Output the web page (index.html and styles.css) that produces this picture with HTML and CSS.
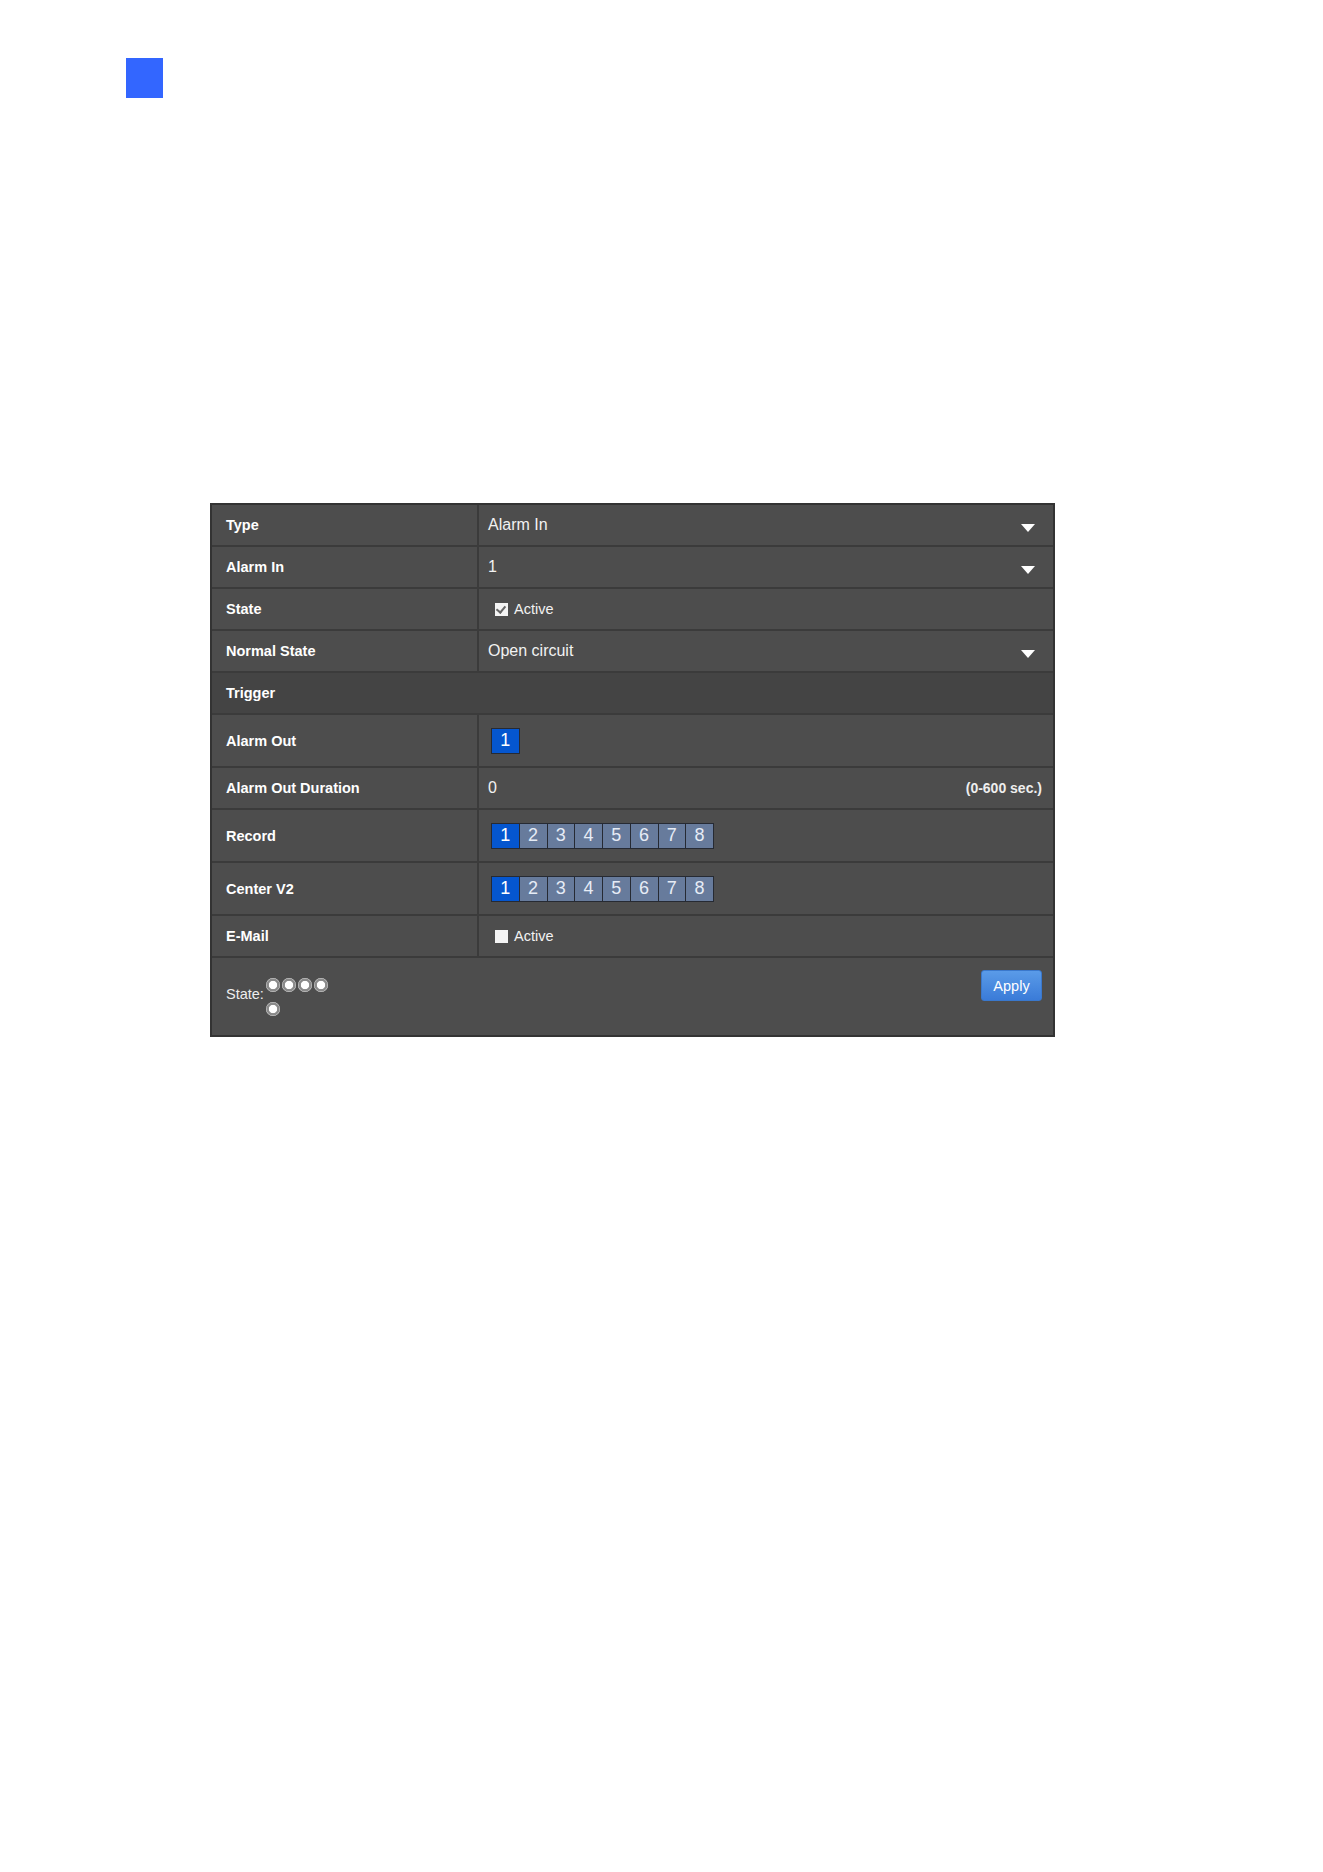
FILE: index.html
```html
<!DOCTYPE html>
<html lang="en">
<head>
  <meta charset="UTF-8">
  <title>Alarm In Settings</title>
  <link rel="stylesheet" href="styles.css">
</head>
<body>
  <div class="marker"></div>

  <div class="panel">
    <div class="row">
      <div class="label">Type</div>
      <div class="value select">Alarm In<span class="caret"></span></div>
    </div>
    <div class="row">
      <div class="label">Alarm In</div>
      <div class="value select">1<span class="caret"></span></div>
    </div>
    <div class="row">
      <div class="label">State</div>
      <div class="value"><label class="check"><span class="box checked"></span>Active</label></div>
    </div>
    <div class="row">
      <div class="label">Normal State</div>
      <div class="value select">Open circuit<span class="caret"></span></div>
    </div>
    <div class="row section">Trigger</div>
    <div class="row tall">
      <div class="label">Alarm Out</div>
      <div class="value"><div class="channels"><span class="ch on">1</span></div></div>
    </div>
    <div class="row">
      <div class="label">Alarm Out Duration</div>
      <div class="value select">0<span class="hint">(0-600 sec.)</span></div>
    </div>
    <div class="row tall">
      <div class="label">Record</div>
      <div class="value">
        <div class="channels">
          <span class="ch on">1</span><span class="ch">2</span><span class="ch">3</span><span class="ch">4</span><span class="ch">5</span><span class="ch">6</span><span class="ch">7</span><span class="ch">8</span>
        </div>
      </div>
    </div>
    <div class="row tall">
      <div class="label">Center V2</div>
      <div class="value">
        <div class="channels">
          <span class="ch on">1</span><span class="ch">2</span><span class="ch">3</span><span class="ch">4</span><span class="ch">5</span><span class="ch">6</span><span class="ch">7</span><span class="ch">8</span>
        </div>
      </div>
    </div>
    <div class="row">
      <div class="label">E-Mail</div>
      <div class="value"><label class="check"><span class="box"></span>Active</label></div>
    </div>
    <div class="footer">
      <div class="status">
        <span class="status-label">State:</span>
        <span class="leds"><i></i><i></i><i></i><i></i><i></i></span>
      </div>
      <button class="apply">Apply</button>
    </div>
  </div>
</body>
</html>
```

FILE: styles.css
```css
body { margin:0; background:#fff; font-family:"Liberation Sans", Arial, sans-serif; }
.marker { width:37px; height:40px; background:#3366ff; margin:58px 0 0 126px; }

.panel { width:845px; margin:405px 0 0 210px; border:2px solid #333; box-sizing:border-box; background:#4d4d4d; color:#fff; }
.row { display:flex; min-height:40px; border-bottom:2px solid #3b3b3b; }
.row.tall { min-height:51px; }
.row.section { background:#444; align-items:center; padding-left:14px; font-weight:bold; font-size:14.5px; }
.label { width:267px; box-sizing:border-box; border-right:2px solid #3b3b3b; padding-left:14px; display:flex; align-items:center; font-weight:bold; font-size:14.5px; }
.value { flex:1; display:flex; align-items:center; padding:0 18px 0 9px; font-size:16px; color:#f2f2f2; }
.select { justify-content:space-between; }
.caret { width:0; height:0; border-left:7px solid transparent; border-right:7px solid transparent; border-top:8px solid #fff; margin-top:5px; }
.hint { font-size:14px; font-weight:bold; color:#eee; margin-right:-7px; }

.check { display:flex; align-items:center; font-size:14.5px; margin-left:7px; }
.box { width:13px; height:13px; background:#f4f4f4; margin-right:6px; position:relative; }
.box.checked::after { content:""; position:absolute; left:3px; top:1px; width:4px; height:7px; border:solid #666; border-width:0 2px 2px 0; transform:rotate(40deg); }

.channels { display:flex; margin-left:3px; border-left:1px solid #262a33; }
.ch { width:26.75px; height:24px; border:1px solid #262a33; border-left:none; background:#677b9c; color:#e6ecf6; font-size:18px; display:flex; align-items:center; justify-content:center; }
.ch.on { background:#0556cf; color:#fff; }

.footer { display:flex; justify-content:space-between; align-items:flex-start; height:77px; padding:12px 11px 0 14px; box-sizing:border-box; }
.status { display:flex; align-items:flex-start; font-size:14.5px; color:#eee; margin-top:8px; }
.status-label { margin-top:8px; }
.leds { display:flex; flex-wrap:wrap; width:66px; margin-left:2px; row-gap:10px; }
.leds i { width:14px; height:14px; margin-right:2px; border-radius:50%; background:radial-gradient(circle, #fff 0 38%, #8a8a8a 46% 62%, #f0f0f0 70%); }
.apply { width:61px; height:31px; border:1px solid #3a78cc; border-radius:3px; background:linear-gradient(#5a9be8, #3a7bd8); color:#fff; font-family:"Liberation Sans", Arial, sans-serif; font-size:14.5px; padding:0; cursor:pointer; }
```
